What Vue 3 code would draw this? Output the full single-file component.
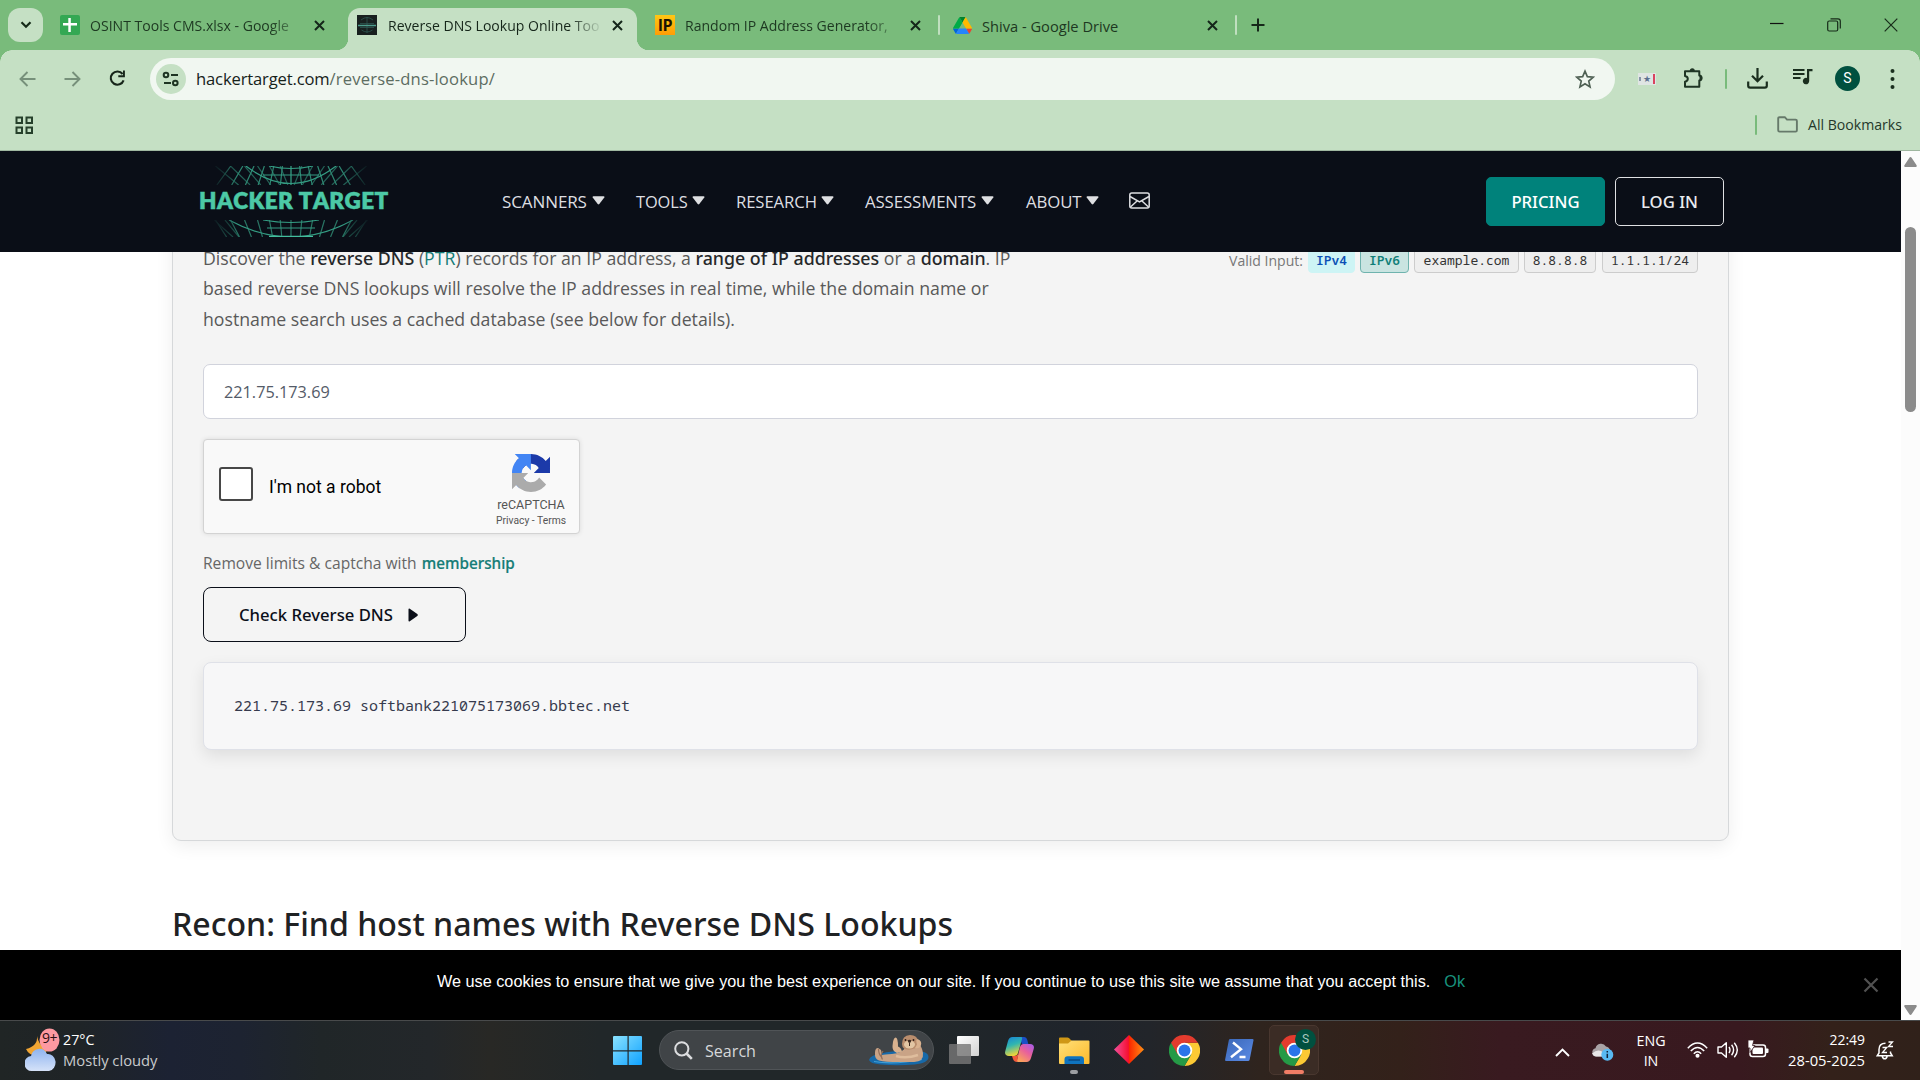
<script setup>
const nav = [
  { label: 'SCANNERS', cls: 'n1' },
  { label: 'TOOLS', cls: 'n2' },
  { label: 'RESEARCH', cls: 'n3' },
  { label: 'ASSESSMENTS', cls: 'n4' },
  { label: 'ABOUT', cls: 'n5' },
]
const chips = [
  { text: 'IPv4', cls: 'v4' },
  { text: 'IPv6', cls: 'v6' },
  { text: 'example.com', cls: 'dom' },
  { text: '8.8.8.8', cls: 'ip' },
  { text: '1.1.1.1/24', cls: 'range' },
]
const meridians = [-70, -56, -43, -31, -20, -10, 0, 10, 20, 31, 43, 56, 70]
</script>

<template>
  <div class="screen">
    <!-- Tab strip -->
    <div class="tabs">
      <button class="tab-search">
        <svg width="12" height="8" viewBox="0 0 12 8"><path d="M1.5 1.3 6 5.8l4.500-4.500" fill="none" stroke="#152a18" stroke-width="2.200" /></svg>
      </button>
      <div class="tab t1">
        <svg class="fav" width="20" height="20" viewBox="0 0 20 20"><rect width="20" height="20" rx="2" fill="#34a853" /><path d="M8.300 3h2.500v5h6.200v2.400h-6.200V17H8.300v-6.600H3V8h5.300z" fill="#fff" /></svg>
        <span class="tt">OSINT Tools CMS.xlsx - Google</span>
        <svg class="x" width="11" height="11" viewBox="0 0 11 11"><path d="M1 1l9 9M10 1l-9 9" /></svg>
      </div>
      <div class="tab t2 active">
        <svg class="fav" width="20" height="20" viewBox="0 0 20 20"><rect width="20" height="20" fill="#18201f" /><path d="M4 5q6-5 12 0M3 8.500h14M3 12.500h14M4.500 15q5.500 4 11 0M10 2v16" fill="none" stroke="#2d5750" stroke-width=".8" /><path d="M1 10.500h18" stroke="#4c9c8c" stroke-width="1.500" /></svg>
        <span class="tt">Reverse DNS Lookup Online Too</span>
        <svg class="x" width="11" height="11" viewBox="0 0 11 11"><path d="M1 1l9 9M10 1l-9 9" /></svg>
      </div>
      <div class="tab t3">
        <span class="fav ipfav">IP</span>
        <span class="tt">Random IP Address Generator,</span>
        <svg class="x" width="11" height="11" viewBox="0 0 11 11"><path d="M1 1l9 9M10 1l-9 9" /></svg>
      </div>
      <i class="tsep"></i>
      <div class="tab t4">
        <svg class="fav" width="19" height="17" viewBox="0 0 87 78"><path d="m6.600 66.850 3.850 6.650c.8 1.400 1.950 2.500 3.300 3.300l13.750-23.800h-27.500c0 1.550.4 3.100 1.200 4.500z" fill="#0066da" /><path d="m43.650 25-13.750-23.800c-1.350.8-2.500 1.900-3.300 3.300l-25.400 44a9 9 0 0 0 -1.200 4.500h27.500z" fill="#00ac47" /><path d="m73.550 76.800c1.350-.8 2.500-1.900 3.300-3.300l1.600-2.750 7.650-13.250c.8-1.400 1.200-2.950 1.200-4.500h-27.500l5.850 11.500z" fill="#ea4335" /><path d="m43.650 25 13.750-23.800c-1.350-.8-2.900-1.200-4.500-1.200h-18.500c-1.600 0-3.150.45-4.500 1.200z" fill="#00832d" /><path d="m59.800 53h-32.300l-13.750 23.800c1.350.8 2.900 1.200 4.500 1.200h50.800c1.600 0 3.150-.45 4.500-1.200z" fill="#2684fc" /><path d="m73.400 26.500-12.700-22c-.8-1.400-1.950-2.500-3.300-3.300l-13.750 23.800 16.150 28h27.450c0-1.550-.4-3.100-1.200-4.500z" fill="#ffba00" /></svg>
        <span class="tt">Shiva - Google Drive</span>
        <svg class="x" width="11" height="11" viewBox="0 0 11 11"><path d="M1 1l9 9M10 1l-9 9" /></svg>
      </div>
      <i class="tsep"></i>
      <svg class="plus" width="14" height="14" viewBox="0 0 14 14"><path d="M7 .5v13M.5 7h13" stroke="#16281a" stroke-width="2" /></svg>
      <div class="win">
        <svg width="14" height="14" viewBox="0 0 14 14"><path d="M0 5.500h13.500" stroke="#111" stroke-width="1.200" /></svg>
        <svg width="14" height="14" viewBox="0 0 14 14" fill="none" stroke="#172b19" stroke-width="1.200"><rect x=".7" y="3" width="10" height="10" rx="1.500" /><path d="M3.500 .8h7.500q2.300 0 2.300 2.300v7.400" /></svg>
        <svg width="14" height="14" viewBox="0 0 14 14"><path d="M.7.7l12.600 12.600M13.300.7.7 13.300" stroke="#172b19" stroke-width="1.200" /></svg>
      </div>
    </div>

    <!-- Toolbar -->
    <div class="toolbar">
      <svg class="back" width="17" height="16" viewBox="0 0 17 16"><path d="M16.500 8H2M8.500 1 1.500 8l7 7" fill="none" stroke="#76907a" stroke-width="1.900" /></svg>
      <svg class="fwd" width="17" height="16" viewBox="0 0 17 16"><path d="M.5 8H15M8.500 1l7 7-7 7" fill="none" stroke="#76907a" stroke-width="1.900" /></svg>
      <svg class="reload" width="17" height="17" viewBox="0 0 17 17"><path d="M14.600 10.300A6.600 6.600 0 1 1 13.600 4" fill="none" stroke="#17251a" stroke-width="2.100" /><path d="M15.900 .6v6.600H9.300V5.300h4.700V.6z" fill="#17251a" /></svg>
      <div class="omni">
        <span class="site">
          <svg width="18" height="16" viewBox="0 0 18 16" fill="none" stroke="#1d3322" stroke-width="2"><circle cx="4" cy="4" r="2.300" /><path d="M9 4h7M2 12h7" /><circle cx="13.300" cy="12" r="2.300" /></svg>
        </span>
        <span class="url"><b>hackertarget.com</b>/reverse-dns-lookup/</span>
        <svg class="star" width="20" height="20" viewBox="0 0 24 24"><path d="M12 2.600l2.800 6.600 7.100.6-5.400 4.700 1.600 7L12 17.800l-6.100 3.700 1.600-7L2.100 9.800l7.100-.6z" fill="none" stroke="#4f6054" stroke-width="2" /></svg>
      </div>
      <span class="ext"><u></u><i>★</i><em></em></span>
      <svg class="puzzle" width="22" height="22" viewBox="0 0 22 22"><path d="M3 4.300h14.300v4.200q2.200.2 2.200 2.500t-2.200 2.500v6.200H3v-5q2.800-.5 2.800-2.900T3 8.900z" fill="none" stroke="#1f3524" stroke-width="2" stroke-linejoin="round" /><path d="M7.800 4a2.500 2.700 0 0 1 5 0zM17.500 8.200a2.800 2.800 0 0 1 0 5.600z" fill="#1f3524" /></svg>
      <i class="vsep s1"></i>
      <svg class="dl" width="21" height="21" viewBox="0 0 21 21"><path d="M10.500 0v13M5 7.800l5.500 5.500L16 7.800M1.200 13.500v4.300q0 1.900 1.900 1.900h14.800q1.900 0 1.900-1.900v-4.300" fill="none" stroke="#1a2e1e" stroke-width="2.200" /></svg>
      <svg class="music" width="20" height="18" viewBox="0 0 20 18"><path d="M0 2h11.500M0 6h11.500M0 10h7.500" stroke="#1a2e1e" stroke-width="2" /><path d="M14 1h5.500v2.300h-3.300V13a3.200 3.200 0 1 1-2.200-3z" fill="#1a2e1e" /></svg>
      <span class="avatar">S</span>
      <svg class="dots" width="5" height="22" viewBox="0 0 5 22" fill="#1a2e1e"><circle cx="2.500" cy="3" r="2" /><circle cx="2.500" cy="11" r="2" /><circle cx="2.500" cy="19" r="2" /></svg>
    </div>

    <div class="bookmarks">
      <svg class="apps" width="19" height="19" viewBox="0 0 19 19" fill="none" stroke="#26402b" stroke-width="2"><rect x="1.500" y="1.500" width="5.500" height="5.500" /><rect x="11.500" y="1.500" width="5.500" height="5.500" /><rect x="1.500" y="11.500" width="5.500" height="5.500" /><rect x="11.500" y="11.500" width="5.500" height="5.500" /></svg>
      <i class="vsep s2"></i>
      <svg class="folder" width="21" height="17" viewBox="0 0 21 17"><path d="M2.500 1.200h5.300L10 3.600h8.600q1.300 0 1.300 1.300v9.300q0 1.400-1.300 1.400h-16q-1.400 0-1.400-1.400V2.500q0-1.300 1.300-1.300z" fill="none" stroke="#66796a" stroke-width="1.900" /></svg>
      <span class="allb">All Bookmarks</span>
    </div>

    <!-- Web page -->
    <div class="page">
      <div class="site-view">
        <header class="head">
          <div class="logo">
            <svg width="158" height="19" viewBox="-79 0 158 19" fill="none" stroke="#2f8873" stroke-width="1.200">
              <path v-for="m in meridians" :key="'a' + m" :d="`M${m * 0.86} 0L${m * 1.06} 19`" />
              <path v-for="m in meridians" :key="'b' + m" :d="`M${m * 1.08} 0L${m * 0.82 - (m < 0 ? -5 : m > 0 ? 5 : 0)} 19`" opacity=".7" />
              <path d="M-45 0Q0 35 45 0M-22 0Q0 5 22 0M-28 9h56" stroke="#349c83" />
            </svg>
            <span class="brand">HACKER TARGET</span>
            <svg width="158" height="17" viewBox="-79 0 158 17" fill="none" stroke="#2a7665" stroke-width="1.200">
              <path v-for="m in meridians" :key="'c' + m" :d="`M${m * 1.08} 0L${m * 0.92} 17`" />
              <path d="M-77 0L-58 17M-66 0L-52 17M77 0L58 17M66 0L52 17" opacity=".7" />
              <path d="M-62 0Q0 34 62 0M-28 0Q0 5 28 0M-24 8h48" stroke="#349c83" />
              <path d="M-22 16.300h44" stroke="#43bd9d" />
            </svg>
          </div>
          <nav class="nav">
            <span v-for="n in nav" :key="n.label" class="item" :class="n.cls">
              <span>{{ n.label }}</span>
              <svg width="13" height="9" viewBox="0 0 13 9"><path d="M1.300.3h10.400q1.300.2.600 1.300L7.300 8q-.8.800-1.600 0L.7 1.600Q.1.500 1.300.3z" fill="#dedfe2" /></svg>
            </span>
            <svg class="mail" width="21" height="17" viewBox="0 0 21 17" fill="none" stroke="#dedfe2" stroke-width="1.500"><rect x=".8" y="1" width="19.400" height="15" rx="2" /><path d="M1 4.500 10.500 10 20 4.500M1.500 15l6.800-6.200M19.500 15l-6.800-6.200" /></svg>
          </nav>
          <span class="btn pricing">PRICING</span>
          <span class="btn login">LOG IN</span>
        </header>

        <main class="content">
          <section class="card">
            <div class="intro">
              <p class="desc">
                <span class="ln l1">Discover the <b>reverse DNS</b> (<a>PTR</a>) records for an IP address, a <b>range of IP addresses</b> or a <b>domain</b>. IP</span>
                <span class="ln">based reverse DNS lookups will resolve the IP addresses in real time, while the domain name or</span>
                <span class="ln">hostname search uses a cached database (see below for details).</span>
              </p>
              <div class="valid">
                <span class="vl">Valid Input:</span>
                <code v-for="c in chips" :key="c.text" :class="c.cls">{{ c.text }}</code>
              </div>
            </div>
            <div class="field">221.75.173.69</div>
            <div class="captcha">
              <span class="box"></span>
              <span class="robot">I'm not a robot</span>
              <div class="rc">
                <svg width="38" height="38" viewBox="0 0 64 64">
                  <path d="M64 31.955l-.033-1.370V4.687l-7.160 7.160C50.948 4.674 42.033.093 32.050.093c-10.400 0-19.622 4.960-25.458 12.640l11.736 11.860a15.550 15.550 0 0 1 4.754-5.334c2.050-1.600 4.952-2.906 8.968-2.906.485 0 .86.057 1.135.163 4.976.393 9.288 3.140 11.828 7.124l-8.307 8.307L64 31.953" fill="#1c3aa9" />
                  <path d="M31.862.094l-1.370.033H4.594l7.160 7.160C4.580 13.147 0 22.060 0 32.046c0 10.400 4.960 19.622 12.640 25.458L24.500 45.768a15.550 15.550 0 0 1-5.334-4.754c-1.600-2.050-2.906-4.952-2.906-8.968 0-.485.057-.86.163-1.135.393-4.976 3.140-9.288 7.124-11.828l8.307 8.307L31.860.095" fill="#4285f4" />
                  <path d="M.001 32.045l.033 1.370v25.898l7.160-7.160c5.860 7.173 14.774 11.754 24.760 11.754 10.400 0 19.622-4.960 25.458-12.640l-11.736-11.860a15.550 15.550 0 0 1-4.754 5.334c-2.050 1.600-4.952 2.906-8.968 2.906-.485 0-.86-.057-1.135-.163-4.976-.393-9.288-3.140-11.828-7.124l8.307-8.307-27.297-.008" fill="#ababab" />
                </svg>
                <span class="rt">reCAPTCHA</span>
                <span class="pt">Privacy - Terms</span>
              </div>
            </div>
            <div class="limits">Remove limits &amp; captcha with <b>membership</b></div>
            <div class="check">
              <span>Check Reverse DNS</span>
              <svg width="10" height="14" viewBox="0 0 10 14"><path d="M.5 1.300Q.7 0 1.800.8l7.500 5.300q1 .9 0 1.800l-7.500 5.300Q.7 14 .5 12.700z" fill="#0b0f19" /></svg>
            </div>
            <pre class="result">221.75.173.69 softbank221075173069.bbtec.net</pre>
          </section>
          <h2>Recon: Find host names with Reverse DNS Lookups</h2>
        </main>

        <div class="cookie">
          <span class="ck">We use cookies to ensure that we give you the best experience on our site. If you continue to use this site we assume that you accept this.</span>
          <span class="ok">Ok</span>
          <svg class="cx" width="16" height="16" viewBox="0 0 16 16"><path d="M1.500 1.500l13 13M14.500 1.500l-13 13" stroke="#515151" stroke-width="2.200" /></svg>
        </div>
      </div>
      <div class="scroll">
        <svg width="13" height="10" viewBox="0 0 13 10"><path d="M6.500 0Q7.200 0 7.600.7l5 7.500q.6 1.500-.8 1.800H1.200Q-.2 9.700.4 8.200l5-7.500Q5.800 0 6.500 0z" fill="#8b8b8b" /></svg>
        <i></i>
        <svg class="down" width="13" height="10" viewBox="0 0 13 10"><path d="M6.500 10q-.7 0-1.100-.7l-5-7.500Q-.2.300 1.200 0h10.600q1.400.3.800 1.800l-5 7.500q-.4.700-1.100.7z" fill="#8b8b8b" /></svg>
      </div>
    </div>

    <!-- Taskbar -->
    <footer class="task">
      <svg class="wx" width="36" height="46" viewBox="0 0 36 46">
        <defs><linearGradient id="cl" x1="0" y1="0" x2="0" y2="1"><stop offset="0" stop-color="#8fb4f0" /><stop offset="1" stop-color="#d5e2f8" /></linearGradient></defs>
        <path d="M12 8q1 10-11 13 3 7 12 7 10-1 10-10Q14 20 12 8z" fill="#f0a533" />
        <path d="M7 43a7 7.500 0 0 1-1-15 8.500 9 0 0 1 16-2 7.500 8.500 0 0 1 2 17z" fill="url(#cl)" />
        <ellipse cx="24.500" cy="12" rx="10" ry="11.500" fill="#fd99a1" />
      </svg>
      <span class="nine">9+</span>
      <div class="wt"><span>27°C</span><span class="mc">Mostly cloudy</span></div>

      <svg class="start" width="30" height="30" viewBox="0 0 30 30">
        <defs><linearGradient id="wn" x1="0" y1="0" x2="1" y2="1"><stop offset="0" stop-color="#8ae2ff" /><stop offset="1" stop-color="#0fa2ff" /></linearGradient></defs>
        <path d="M1 0h13.500v14.300H0V1q0-1 1-1zM15.700 0H28q1 0 1 1v13.300H15.700zM0 15.600h14.500V29H1q-1 0-1-1zM15.700 15.600H29V28q0 1-1 1H15.700z" fill="url(#wn)" />
      </svg>
      <div class="search">
        <svg width="19" height="19" viewBox="0 0 19 19" fill="none" stroke="#dcdddf"><circle cx="7.800" cy="7.800" r="6.600" stroke-width="2" /><path d="M12.500 12.500l5.300 5.300" stroke-width="2.600" /></svg>
        <span>Search</span>
        <svg class="otter" width="60" height="31" viewBox="0 0 60 31">
          <path d="M0 25q1-5 12-6.500Q30 14 55 17q4.500 1.500 4.500 5 0 6-14 7.500-18 1.500-34 0Q1 28.500 0 25z" fill="#1769a8" />
          <path d="M5 26.500q20 3.500 48-2" stroke="#3f9fd6" stroke-width="1.200" fill="none" />
          <path d="M9 13q-3 0-3 5-.5 6 4 7.500 6 1.500 20 1.500h15q10-.5 9-9-1-6-4-9l-13 3q-4 6-14 7-8 .5-10 1l-1-5z" fill="#c9a386" />
          <path d="M14 16q-3 4-.5 8.500M9.500 14q0 5 3 8" stroke="#94705b" stroke-width="1.200" fill="none" />
          <path d="M28 18q-5-2-4.500-7Q24 3 26.500 2.500q2.500 0 2.500 9 3 1 4 5z" fill="#d9b28f" />
          <path d="M33 9q0-8.500 8-9 7.500.2 8.500 7 .5 5-4 6.500-5 2-10 .5-2.500-1.500-2.500-5z" fill="#b98d6d" />
          <ellipse cx="40.500" cy="9.500" rx="5.500" ry="4" fill="#e2c6a4" />
          <path d="M46 13q5 1 6-3t-2.500-5.500-1.500 5z" fill="#d9b28f" />
          <path d="M38.500 5.500q2-1.500 4 0-1 2.500-2 2.500t-2-2.500z" fill="#3c291f" />
          <path d="M40.500 8v3" stroke="#3c291f" />
          <circle cx="36.500" cy="5" r=".9" fill="#2a1b15" /><circle cx="44.500" cy="5" r=".9" fill="#2a1b15" />
          <path d="M27 21q10 3 22-1" stroke="#dfbd9d" stroke-width="2.500" fill="none" />
        </svg>
      </div>
      <svg class="tv" width="31" height="29" viewBox="0 0 31 29"><defs><linearGradient id="tv" x1="0" y1="0" x2="1" y2="1"><stop offset="0" stop-color="#fff" /><stop offset="1" stop-color="#d2d2d2" /></linearGradient></defs><rect x="8" width="22" height="20" rx="1" fill="url(#tv)" /><rect y="8" width="22" height="20" rx="1" fill="#777" opacity=".82" /></svg>
      <svg class="cop" width="29" height="26" viewBox="0 0 29 26">
        <defs><linearGradient id="c1" x1="0" y1="0" x2=".3" y2="1"><stop offset="0" stop-color="#1683d8" /><stop offset=".5" stop-color="#31b6b0" /><stop offset="1" stop-color="#e8d43d" /></linearGradient><linearGradient id="c2" x1="1" y1="0" x2=".3" y2="1"><stop offset="0" stop-color="#a15bf0" /><stop offset=".5" stop-color="#e8609c" /><stop offset="1" stop-color="#fba15c" /></linearGradient></defs>
        <path d="M14 0h5q2.500 0 3.300 3l1 4H17z" fill="#1b4fc7" />
        <path d="M7.500 0H16q1.500 0 1 2l-4 14q-1 3-4 3H4q-5-.5-3.700-5L3 4Q4.200 0 7.500 0z" fill="url(#c1)" />
        <path d="M18.500 7H25q5 .5 3.700 5L26 21q-1.200 4-4.500 4H13q-1.500 0-1-2l3-13q1-3 3.500-3z" fill="url(#c2)" />
        <path d="M7 19h3.500q2-.5 3-3l-1.500 9Q9 25 8 22z" fill="#f05a3c" />
      </svg>
      <span class="app exp">
        <svg width="31" height="28" viewBox="0 0 31 28"><defs><linearGradient id="fo" x1="0" y1="0" x2="1" y2="1"><stop offset="0" stop-color="#ffe078" /><stop offset="1" stop-color="#fcb92b" /></linearGradient></defs><path d="M0 8V1.500Q0 .5 1 .5h7.500q1 0 1.700.8l2.500 2.500L9 8z" fill="#cf9716" /><path d="M0 6.500h9l3.500-3H29.500q1 0 1 1V26q0 1-1 1H1q-1 0-1-1z" fill="url(#fo)" /><path d="M5.500 27v-4.500q0-3.200 3.200-3.200h13.100q3.200 0 3.200 3.200V27z" fill="#0f73be" /><path d="M9.500 23H21" stroke="#0a3e72" stroke-width="1.200" /></svg>
        <i></i>
      </span>
      <svg class="dia" width="31" height="30" viewBox="0 0 31 30"><defs><linearGradient id="di"><stop offset="0" stop-color="#f0509d" /><stop offset=".48" stop-color="#f50f31" /><stop offset=".52" stop-color="#fa2a00" /><stop offset="1" stop-color="#ff8e14" /></linearGradient></defs><path d="M15 0l15 14.500L15 29 0 14.500z" fill="url(#di)" /></svg>
      <svg class="chr" width="31" height="31" viewBox="0 0 48 48"><path d="M24 12h20.800A24 24 0 0 1 24 48l10.400-18z" fill="#fcc934" /><path d="M3.200 12 13.600 30 24 48l10.400-18L24 24z" fill="#259a46" /><path d="M3.200 12A24 24 0 0 0 24 48l-4-14z" fill="#259a46" /><path d="M3.200 12A24 24 0 0 1 44.800 12H24L13.600 30z" fill="#e33b2e" /><circle cx="24" cy="24" r="12" fill="#fff" /><circle cx="24" cy="24" r="9.200" fill="#2a74ea" /></svg>
      <svg class="ps" width="29" height="22" viewBox="0 0 29 22"><defs><linearGradient id="pw" x1="0" y1="0" x2="1" y2="1"><stop offset="0" stop-color="#3a67b8" /><stop offset="1" stop-color="#5c8ce6" /></linearGradient></defs><path d="M5.300 0h22.200q1.200 0 1 1.200L24.700 20.500q-.3 1.500-1.700 1.500H1.200Q-.2 22 .1 20.800L3.800 1.200Q4.100 0 5.300 0z" fill="url(#pw)" /><path d="M8 3.500l8 6.700-10 8M14.500 18h6" fill="none" stroke="#fff" stroke-width="2.400" /></svg>
      <span class="app act">
        <svg width="31" height="31" viewBox="0 0 48 48"><path d="M24 12h20.800A24 24 0 0 1 24 48l10.400-18z" fill="#fcc934" /><path d="M3.200 12 13.600 30 24 48l10.400-18L24 24z" fill="#259a46" /><path d="M3.200 12A24 24 0 0 0 24 48l-4-14z" fill="#259a46" /><path d="M3.200 12A24 24 0 0 1 44.800 12H24L13.600 30z" fill="#e33b2e" /><circle cx="24" cy="24" r="12" fill="#fff" /><circle cx="24" cy="24" r="9.200" fill="#2a74ea" /></svg>
        <b>S</b>
        <i></i>
      </span>

      <svg class="up" width="15" height="9" viewBox="0 0 15 9"><path d="M1 8l6.500-6.500L14 8" fill="none" stroke="#fff" stroke-width="1.900" /></svg>
      <svg class="one" width="22" height="18" viewBox="0 0 22 18"><path d="M4 13.500a4 4.200 0 0 1-.5-8.300A5.700 5.700 0 0 1 14 3.500a5 5 0 0 1 4 4L14 13.500z" fill="#a9a3a6" /><path d="M4 13.500q-3-.5-4-3Q5 6 9 8l5 3.500-1 2z" fill="#e8e6e7" /><circle cx="15.300" cy="11.800" r="6" fill="#58b9f2" /><path d="M15.300 10.800v4.200M15.300 8v1.600" stroke="#10233a" stroke-width="1.500" /></svg>
      <div class="lang"><span>ENG</span><span>IN</span></div>
      <svg class="wifi" width="21" height="16" viewBox="0 0 21 16" fill="none" stroke="#fff" stroke-width="1.500"><path d="M.8 6.200Q10.500-4 20.200 6.200M3.800 9Q10.500 1.800 17.200 9M6.800 11.700q3.700-3.800 7.400 0" /><circle cx="10.500" cy="13.700" r="1.300" fill="#fff" /></svg>
      <svg class="spk" width="22" height="18" viewBox="0 0 22 18" fill="none" stroke="#fff" stroke-width="1.400"><path d="M1 6h3.500L9.300 1.800v14.400L4.500 12H1z" stroke-linejoin="round" /><path d="M12 6q2 3 0 6M14.600 3.800q4 5.200 0 10.400M17.300 1.700q6 7.300 0 14.600" /></svg>
      <svg class="bat" width="21" height="18" viewBox="0 0 21 18"><rect x="2" y="5" width="15.500" height="11.500" rx="2.500" fill="none" stroke="#fff" stroke-width="1.500" /><rect x="4.500" y="7.500" width="10.500" height="6.500" rx="1" fill="#fff" /><path d="M18 8.500h1.500q1 0 1 1v2.500q0 1-1 1H18z" fill="#fff" /><path d="M3.500 0H0v8h2v4.500L7 5.500H4.500L6 0z" fill="#fff" stroke="#38191f" stroke-width=".8" /></svg>
      <div class="clock"><span>22:49</span><span class="dt">28-05-2025</span></div>
      <svg class="bell" width="18" height="19" viewBox="0 0 18 19" fill="none" stroke="#fff" stroke-width="1.500"><path d="M9.500 2.200Q3 2.200 3 8.500v3.500L1.200 14.800h15L14.500 12v-1.500M6.200 15q.6 2.800 2.500 2.800t2.500-2.800" /><path d="M6.500 6.500h4.300l-4.300 5h4.500M12.500 1h4l-4 4.500h4.500" stroke-width="1.300" /></svg>
    </footer>
  </div>
</template>

<style>
html, body { margin: 0; overflow: hidden; }
</style>

<style scoped>
* { box-sizing: border-box; }
svg { display: block; flex: none; }
.screen { width: 1920px; height: 1080px; overflow: hidden; display: flex; flex-direction: column; font-family: "Open Sans", "Noto Sans", sans-serif; white-space: nowrap; background: #c5e0c4; }

.tabs { height: 50px; flex: none; background: #79bb7b; display: flex; align-items: center; }
.tab-search { width: 35px; height: 34px; margin: 0 0 0 8px; padding: 0; border: 0; border-radius: 12px; background: #c5e0c4; display: flex; align-items: center; justify-content: center; flex: none; }
.tab { height: 50px; flex: none; display: flex; align-items: center; font-size: 14.050px; color: #1d3821; position: relative; }
.tab .fav { flex: none; }
.tab .tt { margin-left: 10px; line-height: 24px; padding-top: 1px; }
.tab .x { position: absolute; top: 20px; fill: none; stroke: #14261a; stroke-width: 2; }
.t1 { width: 305px; padding-left: 17px; }
.t1 .tt { -webkit-mask-image: linear-gradient(90deg, #000 180px, rgba(0, 0, 0, .35) 205px); mask-image: linear-gradient(90deg, #000 180px, rgba(0, 0, 0, .35) 205px); }
.t1 .x { left: 271px; }
.t2 { width: 289px; padding-left: 9px; height: 42px; margin-top: 8px; }
.t2 .fav { margin-bottom: 8px; }
.t2 .tt { margin-bottom: 7px; margin-left: 11px; -webkit-mask-image: linear-gradient(90deg, #000 182px, rgba(0, 0, 0, .15) 209px); mask-image: linear-gradient(90deg, #000 182px, rgba(0, 0, 0, .15) 209px); }
.t2 .x { left: 264px; top: 12px; }
.active { background: #c5e0c4; border-radius: 12px 12px 0 0; color: #16261a; }
.active::before, .active::after { content: ""; position: absolute; bottom: 0; width: 12px; height: 12px; }
.active::before { left: -12px; background: radial-gradient(circle at 0 0, #79bb7b 12px, #c5e0c4 12.500px); }
.active::after { right: -12px; background: radial-gradient(circle at 100% 0, #79bb7b 12px, #c5e0c4 12.500px); }
.t3 { width: 301px; padding-left: 18px; }
.t3 .tt { -webkit-mask-image: linear-gradient(90deg, #000 180px, rgba(0, 0, 0, .45) 204px); mask-image: linear-gradient(90deg, #000 180px, rgba(0, 0, 0, .45) 204px); }
.t3 .x { left: 273px; }
.ipfav { width: 20px; height: 20px; background: linear-gradient(#ffc715, #ff9d05); color: #1c1303; font: bold 16px/20px "Open Sans", sans-serif; text-align: center; letter-spacing: -.3px; }
.tsep { width: 2px; height: 20px; background: #c0dfbf; border-radius: 1px; flex: none; }
.t4 { width: 295px; padding-left: 13px; }
.t4 .tt { font-size: 14.650px; }
.t4 .x { left: 267px; }
.plus { margin-left: 14px; }
.win { display: flex; margin-left: auto; gap: 43px; margin-right: 22px; align-items: center; }

.toolbar { height: 57px; flex: none; display: flex; align-items: center; position: relative; background: #c5e0c4; }
.toolbar::before, .toolbar::after { content: ""; position: absolute; top: 0; width: 12px; height: 12px; }
.toolbar::before { left: 0; background: radial-gradient(circle at 100% 100%, #c5e0c4 11.500px, #79bb7b 12px); }
.toolbar::after { right: 0; background: radial-gradient(circle at 0 100%, #c5e0c4 11.500px, #79bb7b 12px); }
.back { margin-left: 19px; }
.fwd { margin-left: 28px; }
.reload { margin-left: 28px; }
.omni { margin-left: 24px; width: 1465px; height: 42px; margin-top: 1px; border-radius: 21px; background: #f1f7f1; display: flex; align-items: center; flex: none; }
.site { width: 30px; height: 30px; border-radius: 50%; background: #c5e0c4; margin-left: 6px; display: flex; align-items: center; justify-content: center; }
.url { margin-left: 10px; margin-top: -1px; font-size: 16.600px; color: #5d6d62; letter-spacing: .17px; }
.url b { font-weight: 400; color: #16221a; letter-spacing: -.15px; }
.star { margin-left: auto; margin-right: 20px; }
.ext { margin-left: 23px; width: 18px; height: 12px; background: #dfe5e3; display: flex; align-items: center; }
.ext u { width: 2px; height: 4px; background: #8795a8; margin-left: 1px; }
.ext i { font: 9px/12px "DejaVu Sans", sans-serif; color: #5a6f8f; margin-left: 2px; }
.ext em { width: 2px; height: 10px; background: #d9435f; margin-left: 2px; }
.puzzle { margin-left: 26px; margin-top: -2px; }
.vsep { width: 2px; height: 20px; background: #79bb7b; border-radius: 1px; flex: none; }
.s1 { margin-left: 21px; }
.dl { margin-left: 20px; }
.music { margin-left: 25px; margin-top: -3px; }
.avatar { margin-left: 22px; width: 25px; height: 25px; border-radius: 50%; background: #00503f; color: #fff; font: 14px/25px Roboto, sans-serif; text-align: center; flex: none; }
.dots { margin-left: 30px; }

.bookmarks { height: 44px; flex: none; display: flex; align-items: center; padding-bottom: 8px; border-bottom: 1px solid #9fb7a0; }
.apps { margin-left: 15px; margin-top: 1px; }
.s2 { margin-left: 1721px; }
.folder { margin-left: 20px; }
.allb { margin-left: 10px; font-size: 14.100px; color: #24382a; }

.page { height: 869px; flex: none; display: flex; }
.site-view { width: 1901px; height: 869px; display: flex; flex-direction: column; background: #fff; overflow: hidden; }
.head { height: 101px; flex: none; background: #0a0e17; display: flex; align-items: center; position: relative; z-index: 2; }
.logo { width: 190px; margin-left: 199px; display: flex; flex-direction: column; align-items: center; padding-right: 7px; margin-top: -1px; flex: none; }
.logo svg { -webkit-mask-image: linear-gradient(90deg, transparent, #000 16%, #000 84%, transparent); mask-image: linear-gradient(90deg, transparent, #000 16%, #000 84%, transparent); }
.brand { font: 800 22.500px/32px Lato, sans-serif; font-kerning: none; color: #4cc9a6; margin: 0 -7px 3px 0; width: 190px; letter-spacing: .4px; -webkit-text-stroke: .5px #4cc9a6; }
.nav { display: flex; align-items: center; margin-left: 113px; color: #dedfe2; font-size: 16.800px; flex: none; }
.item { display: flex; align-items: center; }
.item svg { margin-left: auto; margin-top: -3px; }
.item > span { letter-spacing: -.1px; }
.n1 { width: 103px; font-size: 17px; }
.n2 { width: 69px; margin-left: 31px; font-size: 16.400px; }
.n3 { width: 98px; margin-left: 31px; font-size: 16.700px; }
.n4 { width: 129px; margin-left: 31px; }
.n5 { width: 73px; margin-left: 32px; }
.mail { margin-left: 30px; margin-top: -3px; }
.btn { height: 49px; border-radius: 5px; font: 500 16.700px/47px "Noto Sans", sans-serif; text-align: center; color: #fff; flex: none; }
.pricing { width: 119px; background: #00827b; margin-left: 336px; border: 1px solid #00827b; }
.login { width: 109px; border: 1px solid #dfe0e3; margin-left: 10px; color: #e9eaee; }

.content { flex: 1; overflow: hidden; margin-top: -31px; padding-left: 172px; }
.card { width: 1557px; height: 620px; background: #f4f4f4; border: 1px solid #d6d8da; border-radius: 9px; box-shadow: 0 5px 18px rgba(0, 0, 0, .07); padding: 0 30px; display: flex; flex-direction: column; align-items: flex-start; }
.intro { display: flex; justify-content: space-between; width: 1495px; height: 141px; padding-top: 21px; flex: none; }
.desc { margin: 0; font-size: 17.700px; line-height: 30.300px; color: #595959; }
.desc b { font-family: "Noto Sans", sans-serif; font-weight: 500; font-size: 17.800px; color: #26282a; }
.desc a { color: #157d77; }
.ln { display: block; }
.valid { display: flex; height: 25px; margin-top: 5px; margin-right: 0; align-items: center; }
.vl { font-size: 14.050px; color: #777; margin-right: 5px; margin-top: -1px; }
code { font: 13px/23px "Noto Sans Mono", "DejaVu Sans Mono", monospace; color: #333; background: #eee; border: 1px solid #ccc; border-radius: 4px; height: 25px; text-align: center; flex: none; }
code.v4 { width: 47px; background: #cdf4f5; border-color: #cdf4f5; color: #0b50b5; font-weight: 600; margin-top: -1px; }
code.v6 { width: 49px; background: #c9e4e1; border-color: #6fb3ae; color: #0f7f78; font-weight: 600; margin-left: 5px; }
code.dom { width: 105px; margin-left: 5px; }
code.ip { width: 72px; margin-left: 5px; }
code.range { width: 96px; margin-left: 6px; }
.field { width: 1495px; height: 55px; margin-top: 1px; border: 1px solid #d1d3dc; border-radius: 7px; background: #fff; padding-left: 20px; font-size: 16.250px; line-height: 55px; color: #545b68; flex: none; }
.captcha { margin-top: 20px; width: 377px; height: 95px; border: 1px solid #d3d3d3; border-radius: 4px; background: #f9f9f9; box-shadow: 0 0 5px rgba(0, 0, 0, .1); display: flex; align-items: flex-start; flex: none; }
.box { width: 34px; height: 34px; border: 2px solid #474747; border-radius: 3px; background: #fff; margin: 27px 0 0 15px; }
.robot { font: 17.500px/24px Roboto, sans-serif; color: #000; margin: 35px 0 0 16px; width: 112px; }
.rc { width: 80px; display: flex; flex-direction: column; align-items: center; margin: 14px 0 0 110px; color: #555; font-family: Roboto, sans-serif; }
.rt { font-size: 12.500px; line-height: 16px; margin-top: 5px; }
.pt { font-size: 10.300px; line-height: 14px; margin-top: 1px; }
.limits { font-size: 15.600px; line-height: 24px; color: #666; margin-top: 17px; flex: none; }
.limits b { font: 500 15.300px/24px "Noto Sans", sans-serif; color: #157d77; margin-left: 1px; -webkit-text-stroke: .2px #157d77; }
.check { width: 263px; height: 55px; margin-top: 12px; border: 1px solid #0b0f19; border-radius: 8px; display: flex; align-items: center; padding-left: 35px; color: #0b0f19; font: 500 16.680px/53px "Noto Sans", sans-serif; flex: none; }
.check svg { margin-left: 15px; }
.result { margin: 20px 0 0; width: 1495px; height: 88px; background: #f7f7f8; border: 1px solid #dfe1e8; border-radius: 8px; box-shadow: 0 6px 16px rgba(0, 0, 0, .09); padding-left: 30px; font: 15px/85px "Noto Sans Mono", "DejaVu Sans Mono", monospace; color: #363a4d; flex: none; }
h2 { font: 500 32.100px/44px "Noto Sans", sans-serif; color: #1f2224; margin: 61px 0 0; }
.cookie { height: 70px; flex: none; background: #000; display: flex; font: 16.240px/24px "Liberation Sans", sans-serif; color: #fff; padding-top: 19px; }
.ck { margin-left: 437px; }
.ok { margin-left: 14px; color: #18917d; }
.cx { margin: 8px 22px 0 auto; }
.scroll { width: 19px; height: 869px; background: #fcfcfc; display: flex; flex-direction: column; align-items: center; }
.scroll svg { margin-top: 6px; }
.scroll i { width: 11px; height: 185px; border-radius: 6px; background: #8b8b8b; margin-top: 60px; }
.scroll .down { margin-top: auto; margin-bottom: 5px; }

.task { height: 60px; flex: none; display: flex; align-items: flex-start; border-top: 1px solid #484a4b; color: #fff; background: linear-gradient(90deg, #202525 0, #1f2427 80px, #1c2233 170px, #1d2331 240px, #202628 320px, #23272a 430px, #282825 490px, #212729 600px, #212729 900px, #1f242b 1080px, #22252a 1150px, #2f241e 1260px, #33211a 1400px, #391a20 1500px, #38191f 1740px, #33211a 1830px, #30211a 1920px); }
.wx { margin: 7px 0 0 25px; }
.nine { font: 14px/20px "Open Sans", sans-serif; color: #2a0f13; width: 19px; margin: 7px 0 0 -21px; z-index: 1; letter-spacing: -.5px; text-align: center; }
.wt { display: flex; flex-direction: column; width: 100px; margin: 9px 0 0 4px; font-size: 14.300px; line-height: 20px; flex: none; }
.mc { font-size: 14.750px; color: #c9cbcd; }
.start { margin: 15px 0 0 450px; }
.search { margin: 9px 0 0 16px; width: 275px; height: 40px; border-radius: 20px; background: #404447; border: 1px solid #505457; display: flex; align-items: center; flex: none; font-size: 16.100px; color: #d6d8da; }
.search svg { margin-left: 14px; }
.search span { margin-left: 12px; margin-top: 1px; }
.search .otter { margin-left: auto; margin-right: 4px; }
.tv { margin: 15px 0 0 15px; }
.cop { margin: 16px 0 0 25px; }
.app { position: relative; display: flex; flex: none; }
.app i { position: absolute; bottom: 0; height: 4px; border-radius: 2px; }
.exp { margin: 16px 0 0 25px; height: 37px; }
.exp i { left: 11px; width: 8px; background: #9c9fa3; }
.dia { margin: 14px 0 0 24px; }
.chr { margin: 14px 0 0 24px; }
.ps { margin: 18px 0 0 25px; }
.act { width: 50px; height: 50px; margin: 4px 0 0 15px; border: 1px solid #49372f; border-radius: 5px; background: #3b2c25; padding: 9px 0 0 9px; }
.act b { position: absolute; left: 25px; top: 3px; width: 21px; height: 21px; border-radius: 50%; background: #00503f; color: #a8c8bf; font: 12px/21px Roboto, sans-serif; text-align: center; }
.act i { left: 14px; bottom: 0; width: 20px; background: #f07d66; }
.up { margin: 27px 0 0 236px; }
.one { margin: 22px 0 0 22px; }
.lang { width: 32px; margin: 10px 0 0 21px; font-size: 14.250px; line-height: 20px; display: flex; flex-direction: column; align-items: center; flex: none; }
.wifi { margin: 21px 0 0 20px; }
.spk { margin: 20px 0 0 9px; }
.bat { margin: 19px 0 0 9px; }
.clock { width: 90px; display: flex; flex-direction: column; align-items: flex-end; margin: 9px 0 0 6px; font-size: 13.920px; line-height: 20px; flex: none; }
.dt { font-size: 14.760px; }
.bell { margin: 20px 0 0 11px; }
</style>
